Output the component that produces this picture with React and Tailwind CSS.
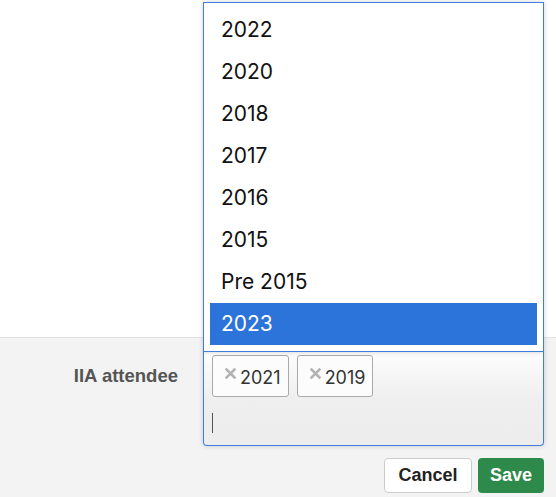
import { useState } from 'react';

const options = ['2022', '2020', '2018', '2017', '2016', '2015', 'Pre 2015', '2023'];

function RemoveIcon() {
    return (
        <svg width="11" height="11" viewBox="0 0 11 11" className="shrink-0">
            <path d="M1.5 1.5 L9.5 9.5 M9.5 1.5 L1.5 9.5" stroke="#b3b3b3" strokeWidth="2.6" strokeLinecap="square" />
        </svg>
    );
}

function Choice({ label }) {
    return (
        <li className="flex items-center h-[42px] pl-[12px] pr-[7px] gap-[4px] border border-[#aaaaaa] rounded-[3px] bg-[#fcfcfc]">
            <span className="-mt-[6px]"><RemoveIcon /></span>
            <span className="pt-[3px] text-[18px] leading-none text-[#333] font-['Inter',sans-serif]">{label}</span>
        </li>
    );
}

export default function App() {
    const [selected] = useState(['2021', '2019']);
    const highlighted = '2023';

    return (
        <div className="w-[556px] h-[497px] bg-white overflow-hidden font-['Liberation_Sans',Arial,sans-serif]">
            <div className="h-[337px]" />

            <div className="border-t border-[#e3e3e3] bg-[#f3f3f3] h-[160px] pt-[14px]">
                <div className="flex">
                    <div className="w-[203px] pr-[25px] pt-[12px] text-right">
                        <span className="text-[18.5px] leading-[24px] font-bold text-[#555]">IIA attendee</span>
                    </div>

                    <div className="relative w-[341px]">
                        {/* drop-up results list */}
                        <div className="absolute bottom-full left-0 w-[341px] bg-white border border-[#3d7fe0] shadow-[0_0_5px_rgba(0,0,0,0.18)] py-[6px] px-[6px] font-['Inter',sans-serif]">
                            <ul>
                                {options.map(opt => (
                                    <li
                                        key={opt}
                                        className={
                                            opt === highlighted
                                                ? 'h-[42px] flex items-center pl-[11px] text-[21px] bg-[#2c74d9] text-white'
                                                : 'h-[42px] flex items-center pl-[11px] text-[21px] text-[#111]'
                                        }
                                    >
                                        {opt}
                                    </li>
                                ))}
                            </ul>
                        </div>

                        {/* choices box */}
                        <div className="border border-t-0 border-[#3d7fe0] rounded-b-[4px] bg-gradient-to-b from-[#fdfdfd] via-[#efefef] to-[#ececec] shadow-[0_0_5px_rgba(0,0,0,0.18)] pl-[8px] pt-[3px] pb-[12px]">
                            <ul className="flex flex-wrap gap-[8px]">
                                {selected.map(s => (
                                    <Choice key={s} label={s} />
                                ))}
                            </ul>
                            <div className="mt-[16px] h-[20px] w-px bg-[#555]" />
                        </div>
                    </div>
                </div>

                <div className="flex justify-end gap-[6px] pr-[12px] mt-[12px]">
                    <button type="button" className="h-[35px] w-[88px] rounded-[4px] border border-[#cccccc] bg-white text-[18px] font-bold text-[#222]">
                        Cancel
                    </button>
                    <button type="button" className="h-[35px] w-[66px] rounded-[4px] bg-[#2e8a4b] text-[18px] font-bold text-white">
                        Save
                    </button>
                </div>
            </div>
        </div>
    );
}
